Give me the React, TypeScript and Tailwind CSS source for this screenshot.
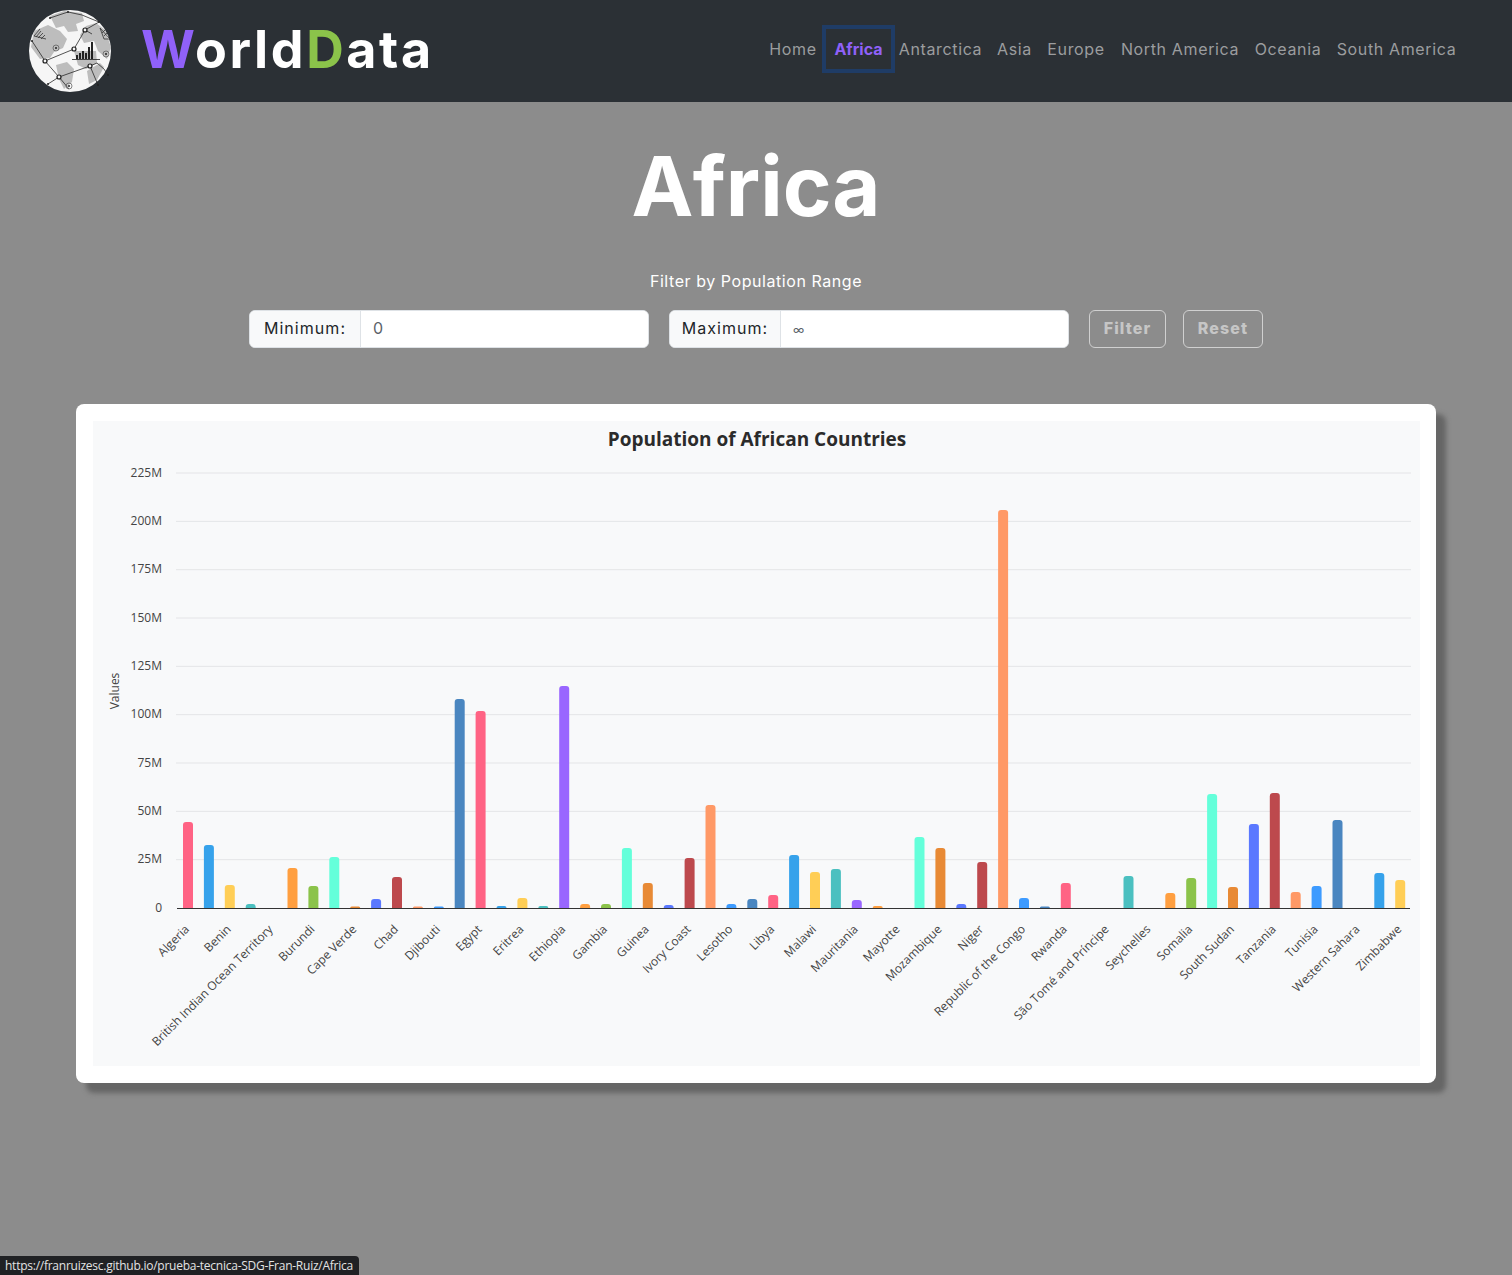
const navItems = [
  { label: "Home", width: "w-[66px]" },
  { label: "Africa", width: "w-[65px]", active: true },
  { label: "Antarctica", width: "w-[99px]" },
  { label: "Asia", width: "w-[49px]" },
  { label: "Europe", width: "w-[74px]" },
  { label: "North America", width: "w-[134px]" },
  { label: "Oceania", width: "w-[82px]" },
  { label: "South America", width: "w-[135px]" },
];

const colors = [
  "#ff6384",
  "#36a2eb",
  "#ffce56",
  "#4bc0c0",
  "#9966ff",
  "#ff9f40",
  "#8bc34a",
  "#64ffda",
  "#e88a35",
  "#5a78ff",
  "#bd494d",
  "#ff9966",
  "#3d9bff",
  "#4a86c0",
];

// y of the top of each bar in page pixels, null = too small to see
const barTops: (number | null)[] = [
  822, 845, 885, 904, null, 868, 886, 857, 906.5, 899, 877, 906.5, 906.5, 699, 711,
  906, 898, 906, 686, 904, 904, 848, 883, 905, 858, 805, 904, 899, 895, 855,
  872, 869, 900, 906, null, 837, 848, 904, 862, 510, 898, 906.5, 883, null, null,
  876, null, 893, 878, 794, 887, 824, 793, 892, 886, 820, null, 873, 880,
];

const axisLabels = [
  "Algeria",
  "Benin",
  "British Indian Ocean Territory",
  "Burundi",
  "Cape Verde",
  "Chad",
  "Djibouti",
  "Egypt",
  "Eritrea",
  "Ethiopia",
  "Gambia",
  "Guinea",
  "Ivory Coast",
  "Lesotho",
  "Libya",
  "Malawi",
  "Mauritania",
  "Mayotte",
  "Mozambique",
  "Niger",
  "Republic of the Congo",
  "Rwanda",
  "São Tomé and Príncipe",
  "Seychelles",
  "Somalia",
  "South Sudan",
  "Tanzania",
  "Tunisia",
  "Western Sahara",
  "Zimbabwe",
];

const ticks = ["0", "25M", "50M", "75M", "100M", "125M", "150M", "175M", "200M", "225M"];

const BASE_Y = 908;
const barX = (i: number) => 188 + i * 20.9;

function Logo() {
  return (
    <svg viewBox="0 0 100 100" className="h-[100px] w-[100px] shrink-0 blur-[0.5px]">
      <circle cx="50" cy="50" r="41" fill="#f6f6f6" />
      <g fill="#bdbdbd">
        <path d="M30 15 L44 10 L62 12 L64 20 L56 23 L58 30 L48 31 L44 25 L36 27 Z" />
        <path d="M14 30 L28 24 L40 30 L47 38 L43 47 L34 51 L30 57 L20 58 L11 46 Z" />
        <path d="M60 34 L66 25 L76 22 L85 29 L91 46 L87 58 L78 50 L74 40 L64 42 Z" />
        <path d="M36 64 L47 61 L54 68 L52 81 L44 88 L39 78 Z" />
        <path d="M67 70 L80 62 L84 66 L77 79 L69 83 Z" />
        <path d="M54 50 L76 50 L77 62 L66 68 L58 64 Z" />
      </g>
      <g fill="none" stroke="#2a2a2a" strokeWidth="0.8">
        <path d="M12 40 L25 60 L54 48 L65 29 L79 21" />
        <path d="M25 60 L39 76 L70 65 L77 62 L84 68 L88 74" />
        <path d="M39 76 L28 83 M39 76 L49 88 M70 65 L78 84" />
        <path d="M30 17 L48 11 L62 14 L79 21 M65 29 L72 33" />
      </g>
      <g fill="#f6f6f6" stroke="#1d1d1d" strokeWidth="1.2">
        <circle cx="65" cy="29" r="2" />
        <circle cx="54" cy="48" r="2" />
        <circle cx="25" cy="60" r="2" />
        <circle cx="39" cy="76" r="2" />
        <circle cx="70" cy="65" r="2" />
      </g>
      <g fill="none" stroke="#555" strokeWidth="0.7">
        <circle cx="36" cy="47" r="3" />
        <circle cx="49" cy="85" r="3" />
        <circle cx="86" cy="53" r="3" />
      </g>
      <g fill="#222">
        <circle cx="36" cy="47" r="1" />
        <circle cx="49" cy="85" r="1" />
        <circle cx="86" cy="53" r="1" />
        <circle cx="12" cy="40" r="1" />
        <circle cx="30" cy="17" r="1" />
        <circle cx="48" cy="11" r="1" />
        <circle cx="79" cy="21" r="1" />
        <circle cx="28" cy="83" r="1" />
        <circle cx="78" cy="84" r="1" />
        <circle cx="88" cy="74" r="1" />
        <rect x="56" y="54" width="2" height="4" />
        <rect x="59" y="52" width="2" height="6" />
        <rect x="62" y="50" width="2" height="8" />
        <rect x="65" y="52" width="2" height="6" />
        <rect x="68" y="46" width="2" height="12" />
        <rect x="71" y="41" width="2" height="17" />
        <rect x="52" y="58" width="28" height="0.8" />
      </g>
      <g fill="none" stroke="#333" strokeWidth="0.8">
        <path d="M14 35 L20 28 M16 36 L21 30 M18 37 L23 32 M21 38 L25 34 M14 35 L26 38" />
        <path d="M80 27 L90 38 M82 32 L85 29 M84 35 L88 31 M80 27 L84 38 M84 38 L90 38" />
      </g>
    </svg>
  );
}

function FilterInput({ label, placeholder, small }: { label: string; placeholder: string; small?: boolean }) {
  return (
    <div className="flex h-[38px] w-[400px] overflow-hidden rounded-md border border-[#dee2e6] bg-white text-[16px] text-[#212529]">
      <span className="flex w-[111px] items-center justify-center border-r border-[#dee2e6] bg-[#f8f9fa] pb-[2px] tracking-[0.065em]">
        {label}
      </span>
      <input
        placeholder={placeholder}
        className={`min-w-0 flex-1 bg-white pb-[2px] pl-[12px] text-[16px] outline-none placeholder:text-[#5c636a] ${small ? "placeholder:text-[12px]" : ""}`}
      />
    </div>
  );
}

function PopulationChart() {
  return (
    <svg viewBox="93 421 1327 645" className="block h-[645px] w-full" style={{ fontFamily: "'Open Sans', sans-serif" }}>
      <text x="757" y="446" textAnchor="middle" fontSize="19" fontWeight="700" fill="#2b2b2b">
        Population of African Countries
      </text>
      {ticks.map((t, i) => {
        const y = BASE_Y - i * 48.33;
        return (
          <g key={t}>
            {i > 0 && <line x1="176" x2="1411" y1={y} y2={y} stroke="#e4e5e7" strokeWidth="1" />}
            <text x="162" y={y + 3.6} textAnchor="end" fontSize="12" fill="#444">
              {t}
            </text>
          </g>
        );
      })}
      <text transform="translate(119 691) rotate(-90)" textAnchor="middle" fontSize="12" fill="#444">
        Values
      </text>
      {barTops.map((top, i) => {
        if (top === null) return null;
        const x = barX(i) - 5;
        const h = BASE_Y - top;
        const r = Math.min(3, h);
        return (
          <path
            key={i}
            d={`M${x} ${BASE_Y}V${top + r}Q${x} ${top} ${x + r} ${top}H${x + 10 - r}Q${x + 10} ${top} ${x + 10} ${top + r}V${BASE_Y}Z`}
            fill={colors[i % colors.length]}
          />
        );
      })}
      <line x1="177" x2="1410" y1={BASE_Y + 0.5} y2={BASE_Y + 0.5} stroke="#333" strokeWidth="1" />
      {axisLabels.map((name, i) => {
        const x = barX(i * 2) + 2;
        return (
          <text
            key={name}
            transform={`translate(${x} 930) rotate(-45)`}
            textAnchor="end"
            fontSize="12"
            fill="#444"
          >
            {name}
          </text>
        );
      })}
    </svg>
  );
}

export default function App() {
  return (
    <div className="relative min-h-screen bg-[#8c8c8c] font-['Inter',sans-serif]">
      <header className="flex h-[102px] items-center justify-between bg-[#2b3035] pl-[20px] pr-[48px]">
        <div className="flex items-center gap-[21px]">
          <Logo />
          <span className="pb-[3px] text-[52px] leading-none font-bold tracking-[0.05em] text-white">
            <span className="text-[#9061f9]">W</span>orld<span className="text-[#8bc34a]">D</span>ata
          </span>
        </div>
        <nav className="flex items-center pb-[4px] text-[16px]">
          {navItems.map((item) =>
            item.active ? (
              <a
                key={item.label}
                className={`flex h-[40px] items-center justify-center font-bold text-[#9061f9] outline-4 outline-[#1f3c66] ${item.width}`}
              >
                {item.label}
              </a>
            ) : (
              <a key={item.label} className={`whitespace-nowrap text-center tracking-[0.04em] text-[#9b9d9f] ${item.width}`}>
                {item.label}
              </a>
            ),
          )}
        </nav>
      </header>

      <main>
        <h1 className="mt-[34px] text-center text-[83px] leading-[100px] font-bold text-white">Africa</h1>
        <p className="mt-[33px] text-center text-[16px] leading-6 tracking-[0.035em] text-white">Filter by Population Range</p>
        <div className="mt-[17px] flex items-center justify-center gap-[20px]">
          <FilterInput label="Minimum:" placeholder="0" />
          <FilterInput label="Maximum:" placeholder="∞" small />
          <div className="flex gap-[17px]">
            <button className="h-[38px] w-[77px] rounded-md border border-[#d0d0d0] pb-[2px] text-[16px] font-extrabold tracking-[0.07em] text-[#c6c6c6]">
              Filter
            </button>
            <button className="h-[38px] w-[80px] rounded-md border border-[#d0d0d0] pb-[2px] text-[16px] font-extrabold tracking-[0.07em] text-[#c6c6c6]">
              Reset
            </button>
          </div>
        </div>

        <section className="mx-[76px] mt-[56px] rounded-lg bg-white py-[17px] pl-[17px] pr-[16px] shadow-[10px_10px_5px_#666666]">
          <div className="bg-[#f8f9fa]">
            <PopulationChart />
          </div>
        </section>
      </main>

      <div className="absolute bottom-0 left-0 flex h-[19px] w-[359px] items-center rounded-tr-sm bg-[#202124] pl-[5px] font-['Open_Sans',sans-serif] text-[12px] tracking-[-0.25px] whitespace-nowrap text-[#e3e3e3]">
        https://franruizesc.github.io/prueba-tecnica-SDG-Fran-Ruiz/Africa
      </div>
    </div>
  );
}
